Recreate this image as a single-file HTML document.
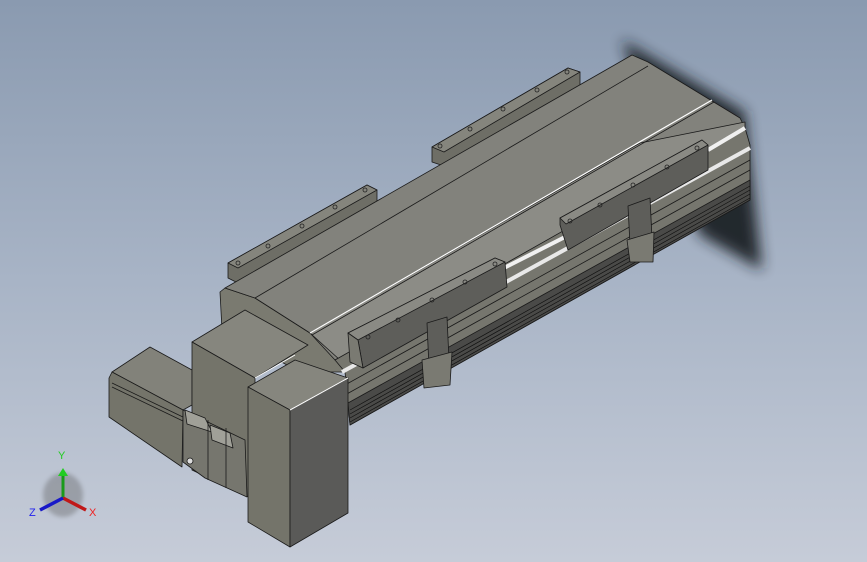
<!DOCTYPE html>
<html><head><meta charset="utf-8"><style>
html,body{margin:0;padding:0;width:867px;height:562px;overflow:hidden}
body{background:linear-gradient(180deg,#8a9ab0 0%,#a8b4c6 50%,#c6ccd8 100%)}
svg{position:absolute;left:0;top:0}
text{font-family:"Liberation Sans",sans-serif;font-size:11px}
</style></head><body>
<svg width="867" height="562" viewBox="0 0 867 562">
<defs>
<filter id="b" x="-50%" y="-50%" width="200%" height="200%"><feGaussianBlur stdDeviation="7"/></filter>
<filter id="b2"><feGaussianBlur stdDeviation="2"/></filter>
</defs>
<polygon points="622,40 745,112 762,270 700,235 640,90" fill="#1e2228" filter="url(#b)" opacity="0.95"/>
<g stroke="#1a1a1a" stroke-width="0.8" stroke-linejoin="round">
<polygon points="228,263 367,185 377,190 377,205 238,283 228,278" fill="#6e6e66"/>
<polygon points="228,263 367,185 377,190 238,268" fill="#85857d"/>
<polygon points="432,147 568,68 580,72 580,88 444,166 432,162" fill="#6e6e66"/>
<polygon points="432,147 568,68 580,72 444,152" fill="#85857d"/>
<polygon points="220,292 225,288 255,298 310,333 345,360 345,372 300,372 222,330" fill="#7a7a70"/>
<polygon points="225,288 632,55 648,62 740,118 745,128 335,360 310,333 255,298" fill="#82827c"/>
<polygon points="310,333 640,143 745,122 745,130 340,360" fill="#8c8c86"/>
<line x1="255" y1="298" x2="648" y2="66" />
<line x1="310" y1="333" x2="712" y2="100" stroke="#fff" stroke-width="1.2"/>
<line x1="312" y1="335" x2="714" y2="102" />
<polygon points="335,360 745,128 750,145 750,200 350,425 345,372" fill="#76766e"/>
<line x1="345" y1="385" x2="750" y2="160"/>
<line x1="345" y1="395" x2="750" y2="170"/>
<polygon points="348,403 750,180 750,200 350,425" fill="#4a4a48"/>
<g stroke="#111" stroke-width="0.7">
<line x1="350" y1="410" x2="750" y2="186"/><line x1="350" y1="414" x2="750" y2="190"/><line x1="350" y1="418" x2="750" y2="194"/><line x1="350" y1="422" x2="750" y2="198"/>
</g>
<line x1="342" y1="372" x2="750" y2="148" stroke="#e8e8e8" stroke-width="4"/>
<line x1="500" y1="270" x2="565" y2="237" stroke="#f0f0f0" stroke-width="4"/>
<line x1="708" y1="150" x2="745" y2="128" stroke="#f0f0f0" stroke-width="4"/>
<polygon points="348,333 495,258 505,262 507,287 363,368 358,340" fill="#5e5e5a"/>
<polygon points="348,333 495,258 505,262 358,340" fill="#8a8a84"/>
<polygon points="348,333 358,340 363,368 350,362" fill="#7a7a72"/>
<polygon points="560,218 702,140 708,145 708,170 568,250 560,225" fill="#5e5e5a"/>
<polygon points="560,218 702,140 708,145 566,224" fill="#8a8a84"/>
<polygon points="427,323 447,317 449,360 429,368" fill="#5e5e5a"/>
<polygon points="422,360 452,352 450,385 424,388" fill="#7a7a72"/>
<polygon points="628,206 650,198 652,238 630,245" fill="#5e5e5a"/>
<polygon points="627,240 654,232 653,262 630,262" fill="#7a7a72"/>
<polygon points="112,372 150,347 192,370 192,405 183,410" fill="#82827a"/>
<polygon points="109,378 112,372 183,410 183,412 182,467 109,417" fill="#74746a"/>
<line x1="112" y1="383" x2="185" y2="418"/>
<line x1="112" y1="387" x2="185" y2="422"/>
<polygon points="192,342 245,310 308,345 255,378" fill="#86867e"/>
<polygon points="192,342 255,378 255,500 192,470" fill="#74746a"/>
<polygon points="183,410 245,440 247,497 205,478 183,462" fill="#76766e"/>
<polygon points="185,410 205,418 212,432 187,424" fill="#a0a098"/>
<polygon points="210,425 230,433 233,448 212,440" fill="#a0a098"/>
<line x1="208" y1="420" x2="208" y2="480"/>
<line x1="226" y1="428" x2="226" y2="488"/>
<circle cx="190" cy="461" r="3" fill="#ddd"/>
<polygon points="248,387 295,360 348,378 290,410" fill="#86867e"/>
<polygon points="248,387 290,410 290,547 248,522" fill="#74746a"/>
<polygon points="290,410 348,378 348,513 290,547" fill="#5a5a58"/>
<line x1="290" y1="410" x2="348" y2="378" stroke="#fff" stroke-width="1"/>
<line x1="255" y1="378" x2="295" y2="355" stroke="#fff" stroke-width="1"/>
</g>
<g fill="none" stroke="#222" stroke-width="0.8">
<circle cx="238" cy="263" r="2"/><circle cx="268" cy="246" r="2"/><circle cx="302" cy="226" r="2"/><circle cx="335" cy="207" r="2"/><circle cx="365" cy="190" r="2"/>
<circle cx="440" cy="146" r="2"/><circle cx="470" cy="129" r="2"/><circle cx="503" cy="109" r="2"/><circle cx="537" cy="90" r="2"/><circle cx="567" cy="72" r="2"/>
<circle cx="368" cy="337" r="2"/><circle cx="398" cy="320" r="2"/><circle cx="432" cy="300" r="2"/><circle cx="465" cy="282" r="2"/><circle cx="495" cy="264" r="2"/>
<circle cx="570" cy="221" r="2"/><circle cx="600" cy="205" r="2"/><circle cx="633" cy="185" r="2"/><circle cx="667" cy="167" r="2"/><circle cx="697" cy="148" r="2"/>
</g>
<ellipse cx="63" cy="495" rx="20" ry="22" fill="#555" opacity="0.35" filter="url(#b2)"/>
<line x1="63" y1="498" x2="63" y2="474" stroke="#1a9a1a" stroke-width="3"/>
<polygon points="58,476 63,468 68,476" fill="#2c2"/>
<line x1="63" y1="498" x2="86" y2="510" stroke="#c01818" stroke-width="3.5"/>
<line x1="63" y1="498" x2="40" y2="510" stroke="#1818c8" stroke-width="3.5"/>
<text x="58" y="459" fill="#2c2">Y</text>
<text x="89" y="516" fill="#e22">X</text>
<text x="29" y="516" fill="#22e">Z</text>
</svg>
</body></html>
